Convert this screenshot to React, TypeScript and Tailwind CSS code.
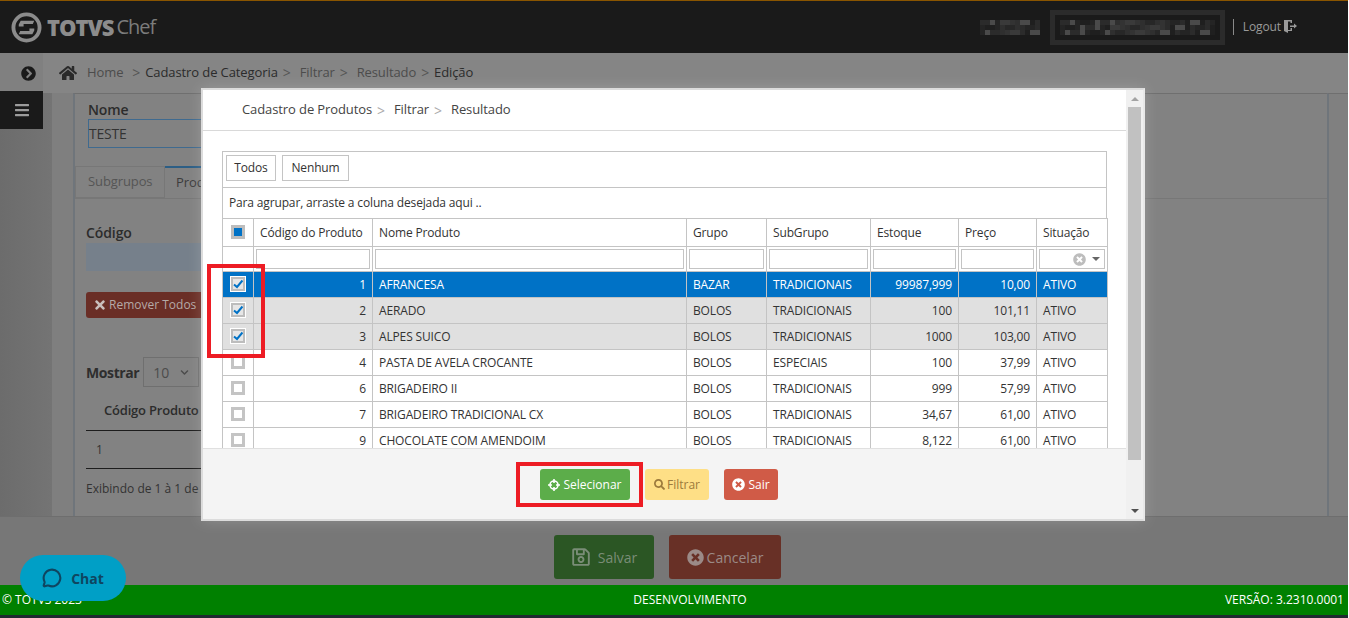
import { MessageCircle } from "lucide-react";
import { FaBars, FaChevronCircleRight, FaHome, FaSearch, FaTimes, FaTimesCircle, FaRegSave, FaChevronDown } from "react-icons/fa";

const rows = [
  ["1", "AFRANCESA", "BAZAR", "TRADICIONAIS", "99987,999", "10,00"],
  ["2", "AERADO", "BOLOS", "TRADICIONAIS", "100", "101,11"],
  ["3", "ALPES SUICO", "BOLOS", "TRADICIONAIS", "1000", "103,00"],
  ["4", "PASTA DE AVELA CROCANTE", "BOLOS", "ESPECIAIS", "100", "37,99"],
  ["6", "BRIGADEIRO II", "BOLOS", "TRADICIONAIS", "999", "57,99"],
  ["7", "BRIGADEIRO TRADICIONAL CX", "BOLOS", "TRADICIONAIS", "34,67", "61,00"],
  ["9", "CHOCOLATE COM AMENDOIM", "BOLOS", "TRADICIONAIS", "8,122", "61,00"],
];

const mosaic = ["#2b2b2b", "#333333", "#242424", "#3a3a3a", "#1f1f1f", "#2f2f2f", "#4a4a4a", "#272727"];

function Blur({ width }: { width: number }) {
  const cells = Array.from({ length: Math.floor(width / 5) }, (_, i) => (i * i * 7 + i * 3) % mosaic.length);
  return (
    <div className="grid grid-flow-col grid-rows-3" style={{ width }}>
      {Array.from({ length: 3 }).flatMap((_, r) =>
        cells.map((c, i) => (
          <div key={`${r}-${i}`} className="h-[5px] w-[5px]" style={{ backgroundColor: mosaic[(c + r * 3) % mosaic.length] }} />
        )),
      )}
    </div>
  );
}

function Sep({ dark }: { dark?: boolean }) {
  return <span className={`ml-[5px] mr-[9px] text-[14px] ${dark ? "text-[#555]" : "text-[#aaa]"}`}>&gt;</span>;
}

function Check() {
  return (
    <span className="mx-auto mb-[2px] flex h-[16px] w-[16px] items-center justify-center border border-white bg-white">
      <span className="flex h-[14px] w-[14px] items-center justify-center border-2 border-[#bdbdbd] bg-[#e6e6e6]">
        <svg viewBox="0 0 10 10" className="h-[10px] w-[10px]">
          <path d="M1 5.5 L4 8 L9.5 1.5" fill="none" stroke="#0072c6" strokeWidth="2" />
        </svg>
      </span>
    </span>
  );
}

function Empty() {
  return <span className="mx-auto mb-[2px] block h-[14px] w-[14px] border-[3px] border-[#c4c4c4] bg-white" />;
}

function FilterInput() {
  return <div className="h-[20px] border border-[#c4c4c4] bg-white" />;
}

function Target() {
  return (
    <svg viewBox="0 0 12 12" className="h-[12px] w-[12px]">
      <circle cx="6" cy="6" r="4" fill="none" stroke="white" strokeWidth="1.6" />
      <path d="M6 0v4M6 8v4M0 6h4M8 6h4" stroke="white" strokeWidth="1.6" />
    </svg>
  );
}

function LogoutIcon() {
  return (
    <svg viewBox="0 0 14 14" className="mb-[3px] ml-[2px] h-[14px] w-[14px]">
      <path d="M1 1h8v3H7.500V2.500H5L5 11H7.500V9H9v3H5v2L1 12Z" fill="#9a9a9a" />
      <path d="M7 6.500h4V4.500l3 2.500-3 2.500V8H7Z" fill="#9a9a9a" />
    </svg>
  );
}

function Logo() {
  return (
    <svg viewBox="0 0 32 32" className="h-[31px] w-[31px]">
      <circle cx="16" cy="16" r="13.500" fill="none" stroke="#8c8c8c" strokeWidth="4" />
      <path d="M8 13 L10 9 H24 L22.500 12.500 H13 L13 15 L8 15Z" fill="#8c8c8c" />
      <path d="M24 19 L22 23 H8 L9.500 19.500 H19 L19 17 L24 17Z" fill="#8c8c8c" />
    </svg>
  );
}

export default function App() {
  return (
    <div className="relative flex h-[618px] w-[1348px] flex-col overflow-hidden bg-[#7b7b7b] font-['Open_Sans','Noto_Sans',sans-serif]">
      <header className="flex h-[53px] shrink-0 items-center justify-between border-t border-[#8a5500] bg-[#1a1a1a] pl-[11px] pr-[51px]">
        <div className="flex items-center">
          <Logo />
          <span className="ml-[5px] text-[22px] font-extrabold tracking-[-1px] text-[#8c8c8c]">TOTVS</span>
          <span className="ml-[3px] text-[20px] tracking-[-1px] text-[#7c7c7c]">Chef</span>
        </div>
        <div className="flex items-center">
          <Blur width={60} />
          <div className="ml-[10px] border-[5px] border-[#2b2b2b] px-[5px] py-[5px]">
            <Blur width={155} />
          </div>
          <span className="ml-[8px] h-[16px] w-px bg-[#8a8a8a]" />
          <span className="ml-[9px] text-[12px] tracking-[-0.1px] text-[#9a9a9a]">Logout</span>
          <LogoutIcon />
        </div>
      </header>

      <nav className="flex h-[40px] shrink-0 bg-[#858585]">
        <div className="flex w-[43px] items-center justify-center bg-[#808080] pl-[14px]">
          <FaChevronCircleRight className="h-[15px] w-[15px] text-[#1a1a1a]" />
        </div>
        <div className="flex items-center pb-[1px] pl-[16px] text-[13px] tracking-[-0.1px] text-[#4c4c4c]">
          <FaHome className="mr-[10px] h-[18px] w-[18px] text-[#2a2a2a]" />
          <span>Home</span>
          <span className="ml-[9px] mr-[5px] text-[14px] text-[#555]">&gt;</span>
          <span className="text-[#2b2b2b]">Cadastro de Categoria</span>
          <Sep dark />
          <span>Filtrar</span>
          <Sep dark />
          <span>Resultado</span>
          <span className="ml-[5px] mr-[5px] text-[14px] text-[#555]">&gt;</span>
          <span className="text-[#2b2b2b]">Edição</span>
        </div>
      </nav>

      <div className="flex min-h-0 flex-1">
        <aside className="w-[52px] shrink-0 bg-gradient-to-r from-[#6c6c6c] to-[#747474]">
          <div className="-mt-[2px] flex h-[38px] w-[43px] items-center justify-center bg-[#1a1a1a]">
            <FaBars className="h-[16px] w-[16px] text-[#9c9c9c]" />
          </div>
        </aside>
        <div className="w-[21px] shrink-0 bg-[#7f7f7f]" />
        <main className="min-w-0 flex-1 border-l-2 border-t border-[#6f757b] border-t-[#6f6f6f] bg-[#828282] pl-[11px] text-[#333]">
          <div className="flex h-[72px] flex-col pl-[2px] pt-[6px]">
            <span className="text-[14px] font-semibold leading-[19px] tracking-[-0.1px] text-[#2c2c2c]">Nome</span>
            <div className="h-[29px] w-[300px] border border-[#3f6a8f] text-[14px] leading-[28px] tracking-[-0.2px] text-[#333]">TESTE</div>
          </div>
          <div className="-ml-[11px] flex h-[33px] border-b border-[#777] text-[13px] tracking-[-0.1px]">
            <span className="flex w-[90px] items-center border border-[#777] pl-[12px] text-[#555]">Subgrupos</span>
            <span className="flex w-[200px] items-center border-t-2 border-[#2c5e85] pl-[11px] text-[#3c3c3c]">Produtos</span>
          </div>
          <div className="flex flex-col pt-[24px]">
            <span className="text-[14px] font-semibold leading-[19px] tracking-[-0.1px] text-[#2c2c2c]">Código</span>
            <div className="mt-[1px] h-[28px] w-[300px] bg-[#76808b]" />
            <div className="mt-[21px] flex h-[26px] w-[150px] items-center rounded-[3px] bg-[#6a2e26] pl-[7px] text-[12px] text-[#b5a9a7]">
              <FaTimes className="mr-[2px] h-[14px] w-[14px] text-[#c9bfbd]" />
              Remover Todos
            </div>
            <div className="mt-[39px] flex h-[30px] items-center">
              <span className="text-[14px] font-bold tracking-[-0.4px] text-[#2e2e2e]">Mostrar</span>
              <div className="ml-[4px] flex h-[30px] w-[56px] items-center justify-between border border-[#6f6f6f] px-[9px] text-[14px] text-[#4c4c4c]">
                10
                <FaChevronDown className="h-[9px] w-[9px]" />
              </div>
            </div>
            <div className="flex h-[44px] w-[300px] items-center border-b border-[#1d1d1d] pl-[18px] pt-[5px] text-[13px] font-semibold tracking-[-0.2px] text-[#2c2c2c]">
              Código Produto
            </div>
            <div className="flex h-[38px] w-[300px] items-center border-b border-[#1d1d1d] pl-[10px] text-[12px] text-[#333]">1</div>
            <span className="mt-[11px] text-[12px] text-[#333]">Exibindo de 1 à 1 de 1</span>
          </div>
        </main>
        <div className="w-[21px] shrink-0 border-l-2 border-t border-[#6f757b] border-t-[#6f6f6f] bg-[#808080]" />
      </div>

      <div className="flex h-[69px] shrink-0 items-start justify-center gap-[15px] border-t border-[#6e6e6e] bg-[#777] pr-[13px] pt-[18px]">
        <button type="button" className="flex h-[44px] w-[100px] items-center justify-center rounded-[3px] bg-[#2b5624] text-[14px] text-[#7a8d77]">
          <FaRegSave className="mr-[7px] h-[20px] w-[20px]" />
          Salvar
        </button>
        <button type="button" className="flex h-[44px] w-[112px] items-center justify-center rounded-[3px] bg-[#683026] text-[14px] text-[#9b8a87]">
          <FaTimesCircle className="mr-[3px] h-[17px] w-[17px]" />
          Cancelar
        </button>
      </div>

      <footer className="flex h-[30px] shrink-0 items-center justify-between bg-[#008000] pb-[1px] pl-[2px] pr-[4px] text-[12px] text-white">
        <span className="w-[334px]">© TOTVS 2023</span>
        <span className="font-medium">DESENVOLVIMENTO</span>
        <span className="w-[300px] text-right">VERSÃO: 3.2310.0001</span>
      </footer>
      <div className="h-[3px] shrink-0 bg-[#1f2b30]" />

      <div className="absolute left-[20px] top-[555px] flex h-[46px] w-[106px] items-center justify-center gap-[9px] rounded-[23px] bg-[#009fc6] text-[14px] font-bold text-[#0f4560]">
        <MessageCircle className="h-[20px] w-[20px]" strokeWidth={2.5} />
        Chat
      </div>

      {/* modal */}
      <div className="absolute left-[201px] top-[88px] flex h-[433px] w-[944px] border-2 border-[#dcdcdc] border-r-[#e8e8e8] bg-white shadow-[0_0_14px_rgba(255,255,255,0.18)]">
        <div className="flex min-w-0 flex-1 flex-col">
          <div className="flex h-[41px] shrink-0 items-center border-b border-[#d9d9d9] pl-[39px] text-[13px] tracking-[-0.1px] text-[#444]">
            <span>Cadastro de Produtos</span>
            <Sep />
            <span>Filtrar</span>
            <Sep />
            <span>Resultado</span>
          </div>
          <div className="h-[317px] shrink-0 overflow-hidden pl-[19px] pr-[19px] pt-[20px] text-[12px] tracking-[-0.15px]">
            <div className="w-[885px] border border-b-0 border-[#c4c4c4]">
              <div className="flex h-[35px] gap-[6px] pl-[3px] pt-[3px] text-[#333]">
                <button type="button" className="h-[26px] w-[50px] border border-[#c4c4c4] bg-white text-[12px]">Todos</button>
                <button type="button" className="h-[26px] w-[67px] border border-[#c4c4c4] bg-white text-[12px]">Nenhum</button>
              </div>
              <div className="flex h-[31px] items-center border-t border-[#c4c4c4] pl-[6px] text-[#333]">Para agrupar, arraste a coluna desejada aqui ..</div>
            </div>
            <table className="w-[885px] table-fixed border-collapse text-[#333]">
              <colgroup>
                <col className="w-[31px]" />
                <col className="w-[119px]" />
                <col className="w-[314px]" />
                <col className="w-[80px]" />
                <col className="w-[104px]" />
                <col className="w-[88px]" />
                <col className="w-[78px]" />
                <col className="w-[71px]" />
              </colgroup>
              <thead>
                <tr className="h-[28px] [&>th]:border [&>th]:border-[#c4c4c4] [&>th]:px-[6px] [&>th]:text-left [&>th]:font-normal">
                  <th>
                    <span className="mx-auto mb-[2px] flex h-[14px] w-[14px] items-center justify-center border-[3px] border-[#bdbdbd] bg-[#0072c6]" />
                  </th>
                  <th>Código do Produto</th>
                  <th>Nome Produto</th>
                  <th>Grupo</th>
                  <th>SubGrupo</th>
                  <th>Estoque</th>
                  <th>Preço</th>
                  <th>Situação</th>
                </tr>
                <tr className="h-[25px] [&>td]:border [&>td]:border-[#c4c4c4] [&>td]:px-[2px]">
                  <td />
                  <td><FilterInput /></td>
                  <td><FilterInput /></td>
                  <td><FilterInput /></td>
                  <td><FilterInput /></td>
                  <td><FilterInput /></td>
                  <td><FilterInput /></td>
                  <td>
                    <div className="flex h-[20px] items-center justify-end border border-[#c4c4c4] bg-white pr-[4px]">
                      <FaTimesCircle className="h-[13px] w-[13px] text-[#bdbdbd]" />
                      <span className="ml-[6px] h-0 w-0 border-x-[4px] border-t-[4px] border-x-transparent border-t-[#666]" />
                    </div>
                  </td>
                </tr>
              </thead>
              <tbody>
                {rows.map((row, i) => (
                  <tr
                    key={row[0]}
                    className={`h-[26px] [&>td]:border [&>td]:border-[#c4c4c4] [&>td]:px-[6px] ${
                      i === 0 ? "bg-[#0072c6] text-white" : i < 3 ? "bg-[#e0e0e0]" : "bg-white"
                    }`}
                  >
                    <td>{i < 3 ? <Check /> : <Empty />}</td>
                    <td className="text-right">{row[0]}</td>
                    <td>{row[1]}</td>
                    <td>{row[2]}</td>
                    <td>{row[3]}</td>
                    <td className="text-right">{row[4]}</td>
                    <td className="text-right">{row[5]}</td>
                    <td>ATIVO</td>
                  </tr>
                ))}
              </tbody>
            </table>
          </div>
          <div className="flex min-h-0 flex-1 items-start border-t border-[#e0e0e0] bg-[#f4f4f4] pl-[337px] pt-[20px] text-[12px]">
            <button type="button" className="flex h-[31px] w-[90px] items-center justify-center gap-[3px] rounded-[3px] bg-[#5cad4a] text-white">
              <Target />
              Selecionar
            </button>
            <button type="button" className="ml-[15px] flex h-[31px] w-[64px] items-center justify-center gap-[2px] rounded-[3px] bg-[#fedf86] text-[#9c7a3c]">
              <FaSearch className="h-[11px] w-[11px]" />
              Filtrar
            </button>
            <button type="button" className="ml-[15px] flex h-[31px] w-[54px] items-center justify-center gap-[3px] rounded-[3px] bg-[#d05b47] text-white">
              <FaTimesCircle className="h-[13px] w-[13px]" />
              Sair
            </button>
          </div>
        </div>
        <div className="flex w-[17px] shrink-0 flex-col items-center bg-[#f0f0f0]">
          <div className="flex h-[17px] items-center justify-center">
            <span className="h-0 w-0 border-x-[4px] border-b-[4px] border-x-transparent border-b-[#a3a3a3]" />
          </div>
          <div className="h-[353px] w-[13px] bg-[#c1c1c1]" />
          <div className="flex flex-1 items-end justify-center pb-[6px]">
            <span className="h-0 w-0 border-x-[4px] border-t-[4px] border-x-transparent border-t-[#505050]" />
          </div>
        </div>
      </div>

      <div className="absolute left-[207px] top-[264px] h-[94px] w-[58px] border-[4px] border-[#ed1c24]" />
      <div className="absolute left-[516px] top-[462px] h-[45px] w-[127px] border-[4px] border-[#ed1c24]" />
    </div>
  );
}
